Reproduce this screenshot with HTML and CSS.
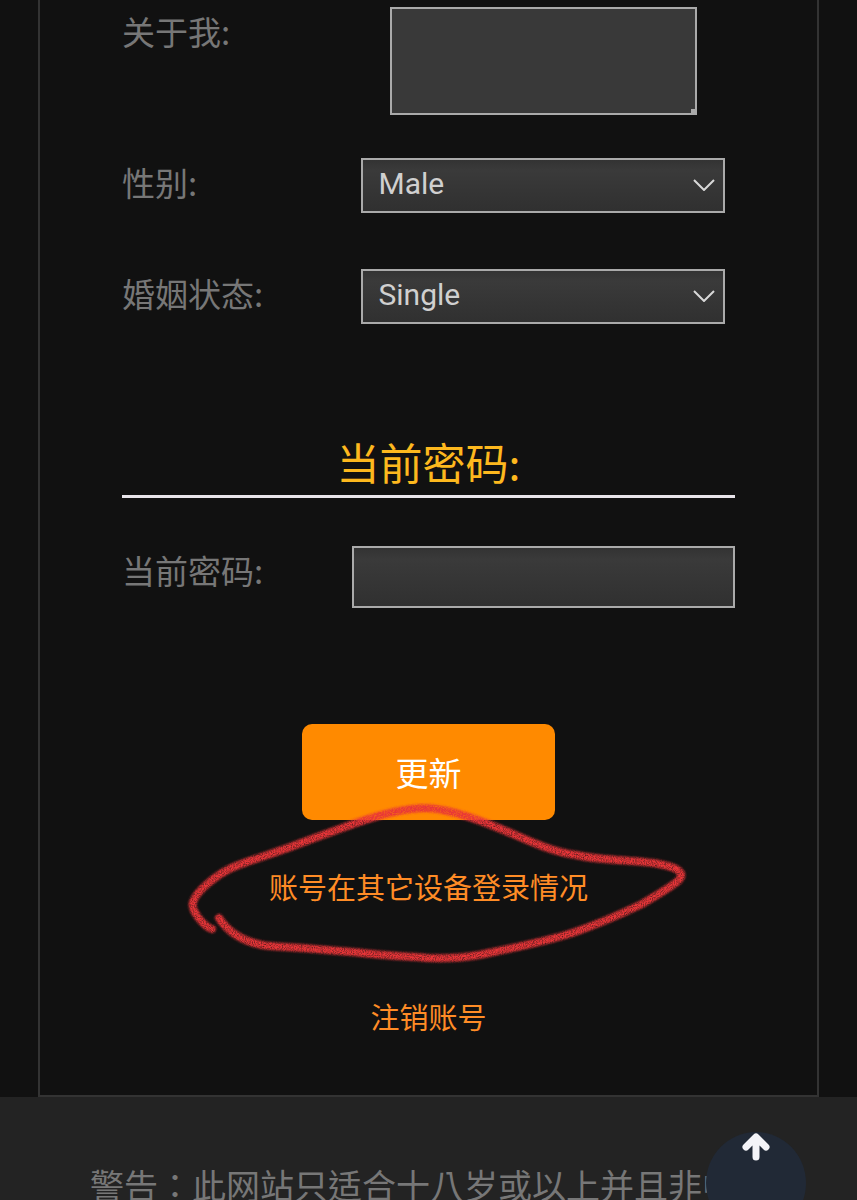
FILE: index.html
```html
<!DOCTYPE html>
<html lang="zh-CN">
<head>
<meta charset="utf-8">
<meta name="viewport" content="width=device-width, initial-scale=1">
<title>当前密码</title>
<link rel="stylesheet" href="styles.css">
</head>
<body>
<main class="panel">
  <form class="form">
    <div class="row row-about">
      <label class="label" for="about">关于我:</label>
      <div class="field"><textarea class="control about" id="about"></textarea></div>
    </div>
    <div class="row">
      <label class="label" for="gender">性别:</label>
      <div class="field select-wrap">
        <select class="control select" id="gender"><option>Male</option><option>Female</option></select>
        <svg class="chevron" viewBox="0 0 22 12" aria-hidden="true"><path d="M1 1L11 11L21 1"/></svg>
      </div>
    </div>
    <div class="row">
      <label class="label" for="status">婚姻状态:</label>
      <div class="field select-wrap">
        <select class="control select" id="status"><option>Single</option><option>Married</option></select>
        <svg class="chevron" viewBox="0 0 22 12" aria-hidden="true"><path d="M1 1L11 11L21 1"/></svg>
      </div>
    </div>
    <h2 class="title">当前密码:</h2>
    <div class="row">
      <label class="label" for="password">当前密码:</label>
      <div class="field"><input class="control password" id="password" type="password"></div>
    </div>
    <div class="actions">
      <button class="submit" type="submit">更新</button>
      <div class="devices">
        <a class="link" href="#devices">账号在其它设备登录情况</a>
        <svg class="scribble" viewBox="180 788 508 200" aria-hidden="true">
          <defs>
            <filter id="crayon" x="-5%" y="-10%" width="110%" height="120%">
              <feTurbulence type="fractalNoise" baseFrequency="0.9" numOctaves="2" seed="4" result="noise"/>
              <feColorMatrix in="noise" type="matrix" values="0 0 0 0 0  0 0 0 0 0  0 0 0 0 0  0 0 0 1.4 0.15" result="grain"/>
              <feGaussianBlur in="SourceGraphic" stdDeviation="0.9" result="soft"/>
              <feComposite in="soft" in2="grain" operator="in"/>
            </filter>
          </defs>
          <path filter="url(#crayon)" d="M213 928C206 926 191 910 194 901C197 891 217 873 237 865C258 857 285 849 310 839L357 822C380 814 405 807 427 807C450 808 475 817 497 826C525 837 548 850 577 854C603 860 640 859 660 863C678 866 687 872 680 879C671 887 656 895 643 903C620 914 600 923 573 932C545 941 510 948 480 954C455 958 435 958 417 956C390 955 375 953 353 951L303 947C288 946 276 946 263 944C243 940 229 931 220 917"/>
        </svg>
      </div>
      <a class="link" href="#delete">注销账号</a>
    </div>
  </form>
</main>
<footer class="footer">
  <p class="warning" lang="zh-TW">警告：此网站只适合十八岁或以上并且非中</p>
</footer>
<button class="to-top" type="button" aria-label="返回顶部">
  <svg class="arrow" viewBox="0 0 28 28" aria-hidden="true"><path d="M14 24V6M4 14L14 4L24 14"/></svg>
</button>
</body>
</html>
```

FILE: styles.css
```css
* {
  box-sizing: border-box;
}

body {
  margin: 0;
  background: #111;
  color: #777;
  font-family: "Noto Sans CJK SC", sans-serif;
  font-size: 33px;
  line-height: 48px;
}

.panel {
  margin: 0 38px;
  padding: 7px 82px 61px;
  border: 2px solid #333;
  border-top: 0;
}

.row {
  display: grid;
  grid-template-columns: 3fr 5fr;
  align-items: start;
  margin-bottom: 56px;
}

.row-about {
  margin-bottom: 43px;
}

.field {
  display: flex;
  justify-content: center;
}

.control {
  margin: 0;
  border: 2px solid #aaa;
  border-radius: 0;
  outline: 0;
  background: linear-gradient(#333, #3a3a3a 20%, #303030);
  color: #d0d0d0;
  font-family: Roboto, sans-serif;
  font-size: 30px;
}

.about {
  width: 80%;
  height: 108px;
  background: linear-gradient(#aaa, #aaa) right bottom / 4px 4px no-repeat #393939;
  resize: none;
}

.select-wrap {
  position: relative;
  width: 95%;
  justify-self: center;
}

.select {
  width: 100%;
  height: 55px;
  padding: 0 48px 4px 15px;
  appearance: none;
}

.chevron {
  position: absolute;
  top: 21px;
  right: 10px;
  width: 22px;
  height: 12px;
  fill: none;
  stroke: #d8d8d8;
  stroke-width: 2;
  pointer-events: none;
}

.title {
  margin: 107px 0 48px;
  padding-bottom: 4px;
  border-bottom: 3px solid #e8e4ea;
  color: #fdb81e;
  font-size: 43px;
  font-weight: 400;
  line-height: 60px;
  text-align: center;
}

.password {
  width: 100%;
  height: 62px;
  padding: 0 16px;
}

.actions {
  display: flex;
  flex-direction: column;
  align-items: center;
  margin-top: 116px;
}

.submit {
  width: 253px;
  height: 96px;
  padding: 0;
  border: 0;
  border-radius: 10px;
  background: #ff8a00;
  color: #fff;
  font: inherit;
}

.devices {
  position: relative;
  display: flex;
  margin: 48px 0 94px;
}

.link {
  color: #ff8c26;
  font-size: 29px;
  line-height: 36px;
  text-decoration: none;
}

.scribble {
  position: absolute;
  top: -79px;
  left: -90px;
  width: 508px;
  height: 200px;
  fill: none;
  stroke: #e83438;
  stroke-width: 8;
  stroke-linecap: round;
  stroke-linejoin: round;
  pointer-events: none;
}

.footer {
  padding: 64px 0 0 90px;
  background: #232323;
}

.warning {
  margin: 0;
  font-family: "Noto Sans CJK TC", sans-serif;
  font-size: 34px;
  white-space: nowrap;
}

.to-top {
  position: fixed;
  right: 51px;
  bottom: -34px;
  display: flex;
  justify-content: center;
  width: 100px;
  height: 102px;
  padding: 1px 0 0;
  border: 0;
  border-radius: 50%;
  background: #212936;
}

.arrow {
  width: 28px;
  height: 28px;
  fill: none;
  stroke: #f4f4f8;
  stroke-width: 7;
  stroke-linecap: round;
  stroke-linejoin: round;
}
```
